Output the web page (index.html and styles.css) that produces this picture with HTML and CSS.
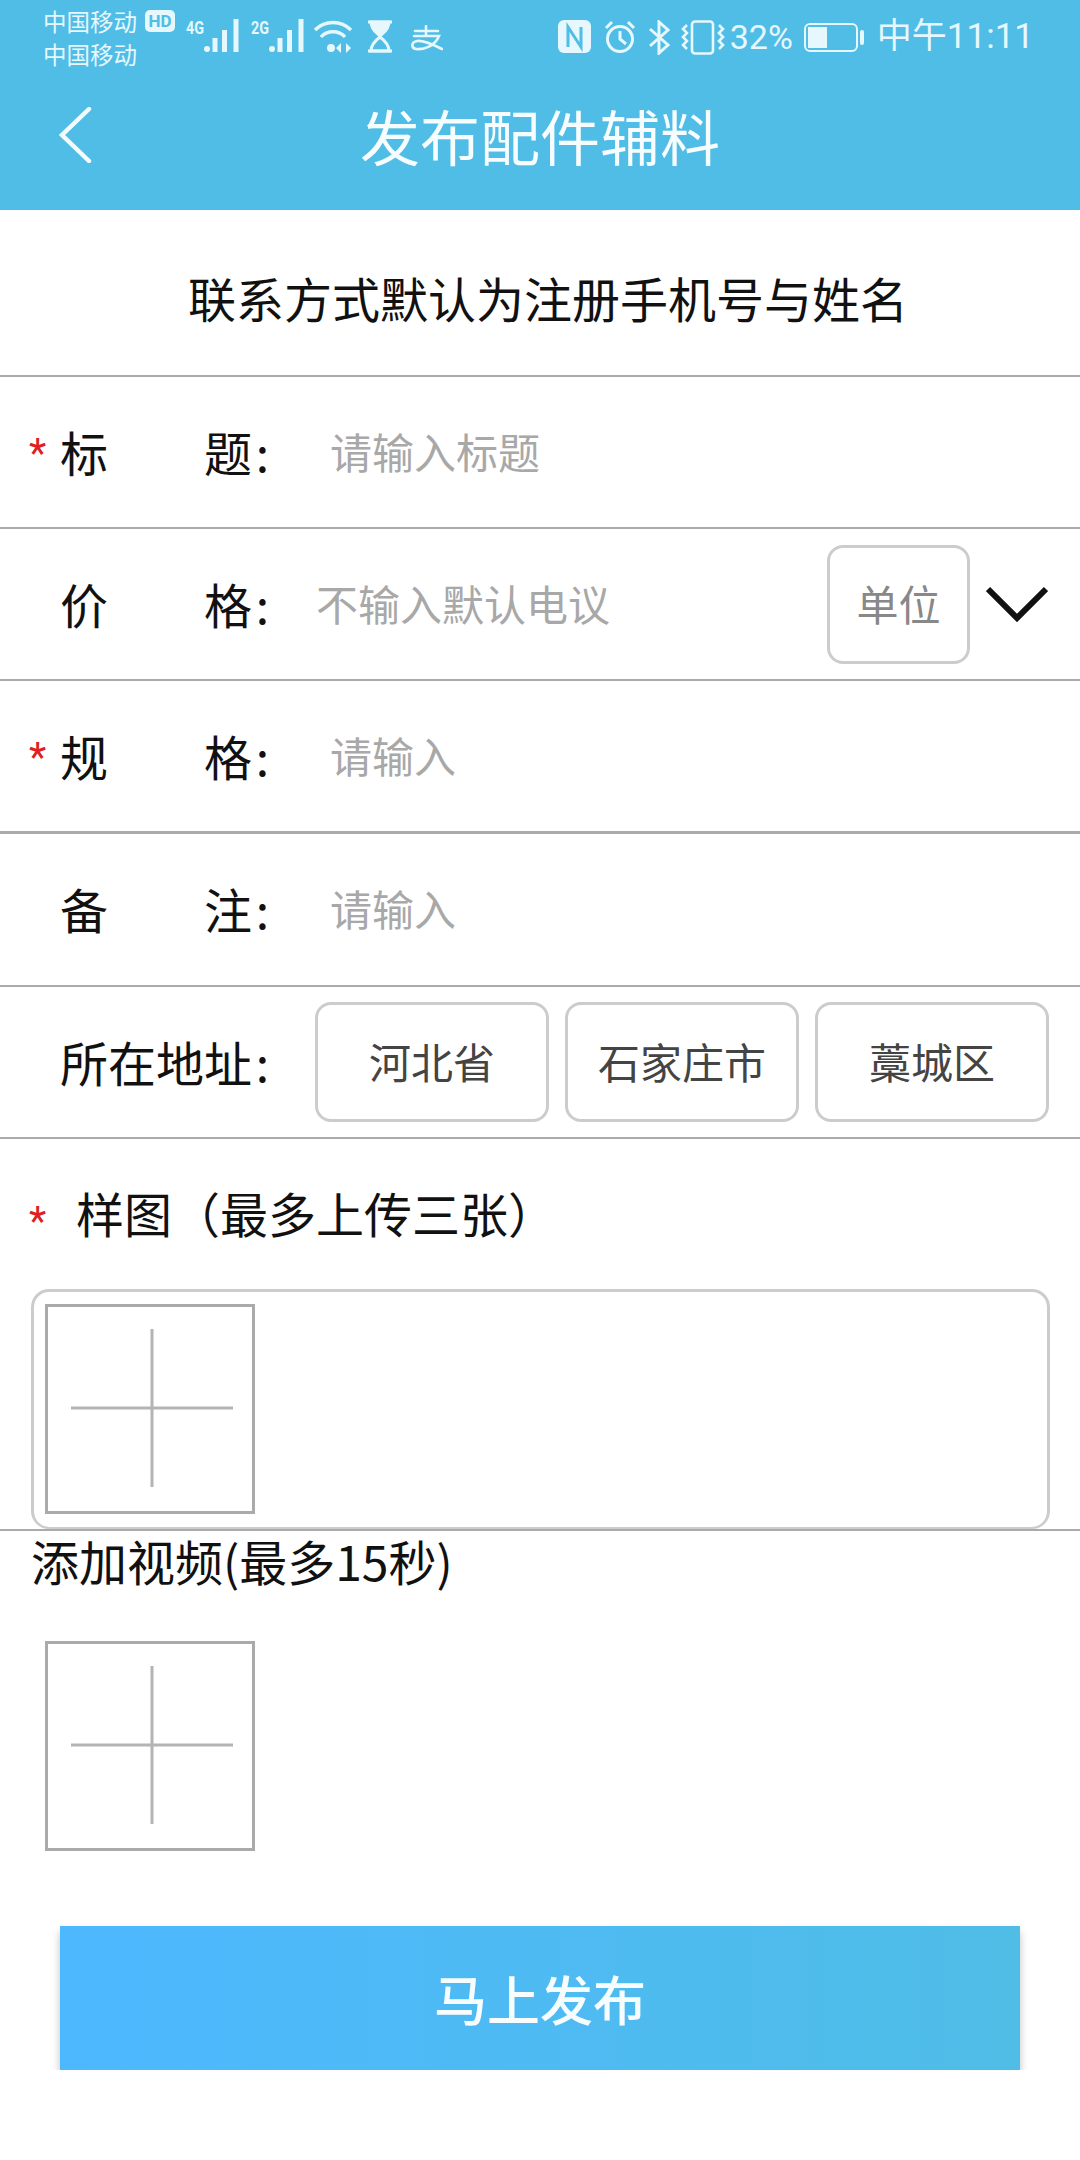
FILE: index.html
```html
<!DOCTYPE html>
<html lang="zh-CN">
<head>
    <meta charset="UTF-8">
    <meta name="viewport" content="width=device-width, initial-scale=1.0">
    <title>发布配件辅料</title>
    <link rel="stylesheet" href="styles.css">
</head>
<body>
    <header class="header">
        <div class="status-bar">
            <div class="status-left">
                <div class="carriers">
                    <div class="carrier-line">中国移动</div>
                    <div class="carrier-line">中国移动</div>
                </div>
                <span class="hd-badge">HD</span>
                <svg class="signal" width="53" height="38" viewBox="0 0 53 38">
                    <text x="0" y="18" class="signal-text" textLength="18" lengthAdjust="spacingAndGlyphs">4G</text>
                    <circle cx="21" cy="33" r="3" fill="#e6f7fd"/>
                    <rect x="26.500" y="22" width="5" height="14" fill="#e6f7fd"/>
                    <rect x="36" y="14" width="5" height="22" fill="#e6f7fd"/>
                    <rect x="47.500" y="3" width="5" height="33" fill="#e6f7fd"/>
                </svg>
                <svg class="signal signal-two" width="54" height="38" viewBox="0 0 54 38">
                    <text x="0" y="18" class="signal-text" textLength="18" lengthAdjust="spacingAndGlyphs">2G</text>
                    <circle cx="21" cy="33" r="3" fill="#e6f7fd"/>
                    <rect x="26.500" y="22" width="5" height="14" fill="#e6f7fd"/>
                    <rect x="36" y="14" width="5" height="22" fill="#e6f7fd"/>
                    <rect x="47.500" y="3" width="5" height="33" fill="#e6f7fd"/>
                </svg>
                <svg class="wifi" width="40" height="34" viewBox="0 0 40 34" fill="none" stroke="#e6f7fd" stroke-width="3.400">
                    <path d="M2 11C12 1 28 1 38 11"/>
                    <path d="M8 18C14 11 26 11 32 18"/>
                    <circle cx="18" cy="29" r="4" fill="#e6f7fd" stroke="none"/>
                    <path d="M28 24l-5 5 5 5zM33 24l5 5-5 5z" fill="#e6f7fd" stroke="none"/>
                </svg>
                <svg class="hourglass" width="26" height="33" viewBox="0 0 26 33" fill="none" stroke="#e6f7fd" stroke-width="3">
                    <path d="M1 2H25M1 31H25"/>
                    <path d="M4 2H22C22 10 16 13 13 16C10 13 4 10 4 2Z" fill="#e6f7fd"/>
                    <path d="M13 17C17 20 22 24 22 31H4C4 24 9 20 13 17Z"/>
                </svg>
                <svg class="alipay" width="33" height="26" viewBox="0 0 33 26" fill="none" stroke="#e6f7fd" stroke-width="2.600" stroke-linecap="round">
                    <path d="M5 6H28M16 1V11M4 11H29C25 21 14 25 6 24C1 23 1 17 7 16C14 15 24 20 32 24"/>
                </svg>
            </div>
            <div class="status-right">
                <svg class="nfc" width="33" height="33" viewBox="0 0 33 33">
                    <rect width="33" height="33" rx="6" fill="#e6f7fd"/>
                    <path d="M10 27V7L23 27V7" fill="none" stroke="#4fbde6" stroke-width="3"/>
                </svg>
                <svg class="alarm" width="32" height="34" viewBox="0 0 32 34" fill="none" stroke="#e6f7fd" stroke-width="3">
                    <circle cx="16" cy="19" r="12.500"/>
                    <path d="M16 11V19L22 24"/>
                    <path d="M2 8L8 2M30 8L24 2"/>
                </svg>
                <svg class="bluetooth" width="21" height="35" viewBox="0 0 21 35" fill="none" stroke="#e6f7fd" stroke-width="3">
                    <path d="M1 9L19 25L10 33V2L19 10L1 26"/>
                </svg>
                <svg class="vibrate" width="44" height="35" viewBox="0 0 44 35" fill="none" stroke="#e6f7fd" stroke-width="2.600">
                    <rect x="11" y="1.500" width="21" height="32" rx="3"/>
                    <path d="M6 5L2 9L6 13L2 17L6 21L2 25L6 29"/>
                    <path d="M38 5L42 9L38 13L42 17L38 21L42 25L38 29"/>
                </svg>
                <span class="percent">32%</span>
                <svg class="battery" width="61" height="29" viewBox="0 0 61 29">
                    <rect x="1" y="1" width="52" height="27" rx="5" fill="none" stroke="#e6f7fd" stroke-width="2"/>
                    <rect x="4" y="4" width="19" height="21" fill="#e6f7fd"/>
                    <rect x="56" y="7" width="4" height="15" rx="2" fill="#e6f7fd"/>
                </svg>
                <span class="clock">中午11:11</span>
            </div>
        </div>
        <div class="nav-bar">
            <svg class="back" width="34" height="56" viewBox="0 0 34 56" fill="none" stroke="#f2fbfe" stroke-width="4.500" stroke-linecap="round">
                <path d="M31 2L4 28L31 54"/>
            </svg>
            <h1 class="page-title">发布配件辅料</h1>
        </div>
    </header>

    <main>
        <div class="notice">联系方式默认为注册手机号与姓名</div>

        <div class="row">
            <span class="star">*</span>
            <div class="label"><span>标</span><span>题<span class="colon">:</span></span></div>
            <span class="hint">请输入标题</span>
        </div>
        <div class="row">
            <span class="star"></span>
            <div class="label"><span>价</span><span>格<span class="colon">:</span></span></div>
            <span class="hint hint-price">不输入默认电议</span>
            <div class="unit-box">单位</div>
            <svg class="chevron" width="62" height="36" viewBox="0 0 62 36" fill="none" stroke="#111" stroke-width="6">
                <path d="M2 3L31 32L60 3"/>
            </svg>
        </div>
        <div class="row row-thick">
            <span class="star">*</span>
            <div class="label"><span>规</span><span>格<span class="colon">:</span></span></div>
            <span class="hint">请输入</span>
        </div>
        <div class="row row-after-thick">
            <span class="star"></span>
            <div class="label"><span>备</span><span>注<span class="colon">:</span></span></div>
            <span class="hint">请输入</span>
        </div>
        <div class="row">
            <span class="star"></span>
            <div class="label"><span>所在地址<span class="colon">:</span></span></div>
            <div class="chips">
                <div class="chip">河北省</div>
                <div class="chip">石家庄市</div>
                <div class="chip">藁城区</div>
            </div>
        </div>

        <section class="photos">
            <div class="section-title">
                <span class="star">*</span>
                <span>样图（最多上传三张）</span>
            </div>
            <div class="photo-box">
                <div class="tile">
                    <svg width="162" height="158" viewBox="0 0 162 158" stroke="#b4b4b4" stroke-width="3">
                        <path d="M0 79H162M81 0V158"/>
                    </svg>
                </div>
            </div>
        </section>

        <section class="video">
            <div class="video-title">添加视频(最多15秒)</div>
            <div class="tile">
                <svg width="162" height="158" viewBox="0 0 162 158" stroke="#b4b4b4" stroke-width="3">
                    <path d="M0 79H162M81 0V158"/>
                </svg>
            </div>
        </section>

        <button class="submit">马上发布</button>
    </main>
</body>
</html>
```
FILE: styles.css
```css
* {
    box-sizing: border-box;
}
body {
    margin: 0;
    background: #fff;
    color: #111;
    font-family: "Noto Sans CJK SC", "Noto Sans", sans-serif;
}
.header {
    height: 210px;
    background: #4fbde6;
}
.status-bar {
    height: 72px;
    padding: 10px 46px 0 43px;
    display: flex;
    justify-content: space-between;
    align-items: flex-start;
    color: #e6f7fd;
}
.status-left,
.status-right {
    display: flex;
    align-items: flex-start;
}
.carriers {
    width: 94px;
    margin-top: -5px;
    font-size: 23.500px;
    line-height: 33px;
    white-space: nowrap;
}
.hd-badge {
    width: 30px;
    height: 22px;
    margin-left: 8px;
    border-radius: 5px;
    background: #e6f7fd;
    color: #4fbde6;
    font: bold 17px/22px Roboto, sans-serif;
    text-align: center;
}
.signal {
    margin-left: 11px;
    margin-top: 6px;
}
.signal-two {
    margin-left: 12px;
}
.signal-text {
    fill: #e6f7fd;
    font: bold 19px Roboto, sans-serif;
}
.wifi {
    margin-left: 8px;
    margin-top: 9px;
}
.hourglass {
    margin-left: 14px;
    margin-top: 10px;
}
.alipay {
    margin-left: 17px;
    margin-top: 15px;
}
.status-right {
    padding-top: 10px;
}
.alarm {
    margin-left: 13px;
}
.bluetooth {
    margin-left: 13px;
}
.vibrate {
    margin-left: 11px;
}
.percent {
    margin-left: 5px;
    font: 34px/34px Roboto, sans-serif;
}
.battery {
    margin-left: 11px;
    margin-top: 3px;
}
.clock {
    margin-left: 12px;
    font: 35px/34px Roboto, "Noto Sans CJK SC", sans-serif;
    white-space: nowrap;
}
.nav-bar {
    height: 138px;
    display: grid;
    grid-template-columns: 1fr auto 1fr;
    align-items: center;
    padding: 0 58px 13px;
}
.page-title {
    margin: 0;
    grid-column: 2;
    color: #f7fdff;
    font-size: 60px;
    font-weight: 400;
    line-height: 80px;
}
.back {
    grid-column: 1;
    grid-row: 1;
}
.notice {
    height: 167px;
    border-bottom: 2px solid #aaa;
    padding: 8px 0 0 16px;
    display: flex;
    align-items: center;
    justify-content: center;
    font-size: 48px;
    color: #111;
}
.row {
    height: 152px;
    border-bottom: 2px solid #aaa;
    padding: 0 30px 0 29px;
    display: flex;
    align-items: center;
}
.row-thick {
    height: 153px;
    border-bottom-width: 3px;
}
.row-after-thick {
    height: 153px;
}
.star {
    width: 31px;
    flex: none;
    margin-top: 3px;
    color: #e02020;
    font: 40px/40px Roboto, sans-serif;
}
.label {
    width: 212px;
    margin-bottom: 3px;
    display: flex;
    justify-content: space-between;
    font-size: 48px;
    line-height: 64px;
    white-space: nowrap;
}
.colon {
    display: inline-block;
    width: 20px;
    padding-right: 3px;
    text-align: right;
}
.hint {
    margin-left: 58px;
    margin-bottom: 4px;
    color: #a8a8a8;
    font-size: 42px;
}
.hint-price {
    margin-left: 44px;
}
.unit-box {
    width: 143px;
    height: 119px;
    margin-left: auto;
    padding-bottom: 3px;
    border: 3px solid #ccc;
    border-radius: 16px;
    display: flex;
    align-items: center;
    justify-content: center;
    color: #888;
    font-size: 42px;
}
.chevron {
    margin-left: 16px;
    margin-right: 2px;
}
.chips {
    margin-left: 43px;
    display: flex;
    gap: 16px;
}
.chip {
    width: 234px;
    height: 120px;
    padding-bottom: 4px;
    border: 3px solid #ccc;
    border-radius: 16px;
    display: flex;
    align-items: center;
    justify-content: center;
    color: #444;
    font-size: 42px;
}
.photos {
    border-bottom: 2px solid #aaa;
}
.section-title {
    height: 150px;
    padding: 41px 0 0 29px;
    display: flex;
    align-items: flex-start;
    font-size: 48px;
    line-height: 64px;
}
.section-title .star {
    width: 47px;
    margin-top: 22px;
}
.photo-box {
    height: 240px;
    margin: 0 30px 0 31px;
    padding: 12px 11px;
    border: 3px solid #ccc;
    border-bottom-width: 2px;
    border-radius: 18px;
}
.tile {
    width: 210px;
    height: 210px;
    padding: 0 0 3px 3px;
    border: 3px solid #aaa;
    display: flex;
    align-items: center;
    justify-content: center;
}
.video {
    padding-left: 31px;
}
.video-title {
    height: 110px;
    font-size: 48px;
    line-height: 58px;
}
.video .tile {
    margin-left: 14px;
}
.submit {
    display: block;
    width: 960px;
    height: 144px;
    margin: 75px 0 0 60px;
    border: none;
    background: linear-gradient(90deg, #4db8ff, #4fbde6);
    box-shadow: 0 6px 8px rgba(0, 0, 0, 0.25);
    color: #f7fdff;
    font-family: "Noto Sans CJK SC", sans-serif;
    font-size: 53px;
    font-weight: 500;
}
```
